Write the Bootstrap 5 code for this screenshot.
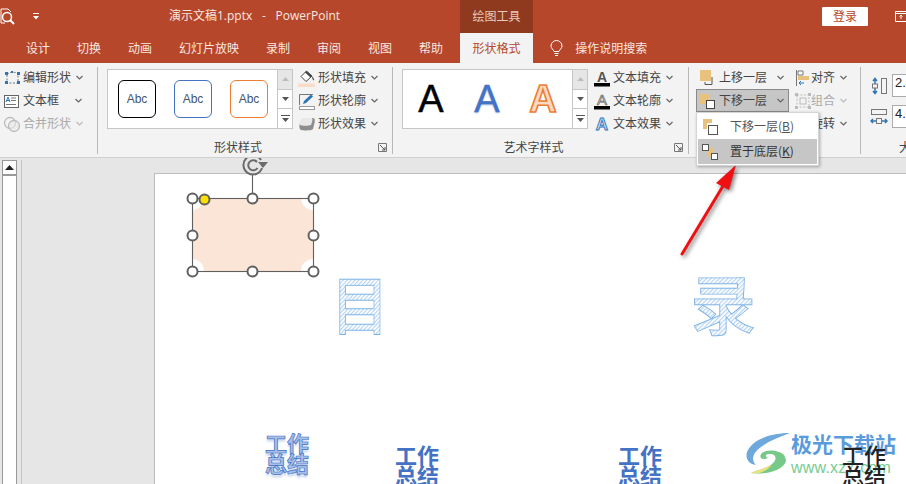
<!DOCTYPE html>
<html lang="zh-CN">
<head>
<meta charset="utf-8">
<title>PowerPoint</title>
<link href="https://cdn.jsdelivr.net/npm/bootstrap@5.3.0/dist/css/bootstrap.min.css" rel="stylesheet">
<style>
html,body{height:100%;overflow:hidden}
body{font:12px/1.2 "Noto Sans CJK SC","Liberation Sans",sans-serif;color:#444;background:#fff}
.ppt-app{width:906px;height:484px;overflow:hidden}
.ppt-title{height:33px;background:#b7472a;color:#f6e6e0;flex:none}
.ppt-title>*{flex:none}
.ppt-qa{width:33px}
.ppt-qb{width:136px}
.ppt-name{width:291px;font-family:"Open Sans","Noto Sans CJK SC",sans-serif;white-space:pre;word-spacing:1.75px}
.ppt-tool{width:73px;height:33px;background:#8f3a1f;color:#e9c9bd}
.ppt-login{width:46px;height:19px;margin-left:289px;background:#fff;color:#b7472a;border-radius:1px}
.ppt-winbtn{margin-left:27px}
.ppt-tabs{height:30px;background:#b7472a;color:#f6e6e0;padding-left:26px;flex:none}
.ppt-tabs>span{margin-right:27px;white-space:nowrap;flex:none}
.ppt-tabs>.ppt-active{background:#f3f3f3;color:#b7472a;width:73px;height:30px;margin-left:-10px;margin-right:17px}
.ppt-tabs>.ppt-bulb{margin-right:12px}
.ppt-ribbon{height:95px;background:#f3f3f3;border-bottom:1px solid #d0d0d0;flex:none;position:relative;z-index:5}
.ppt-sep{width:1px;margin:4px 0 3px;background:#b8b8b8;flex:none}
.ppt-group{flex:none}
.ppt-g1{width:97px}.ppt-g2{width:294px}.ppt-g3{width:295px}.ppt-g4{width:171px}.ppt-g5{width:100px}
.ppt-body{height:74px;padding-top:3px}
.ppt-g1 .ppt-body{padding-left:3px}
.ppt-g2 .ppt-body,.ppt-g3 .ppt-body{padding-left:9px}
.ppt-g4 .ppt-body{padding-left:7px}
.ppt-g5 .ppt-body{padding-left:9px}
.ppt-cmd{height:23px;white-space:nowrap}
.ppt-ico{width:18px;height:18px;margin-right:2px;flex:none;display:block}
.ppt-caret{width:7px;height:5px;margin-left:5px;flex:none;display:block}
.ppt-off{color:#aaa}
.ppt-label{height:20px;color:#444}
.ppt-labeltext{flex:1;text-align:center}
.ppt-expand{width:9px;height:9px;margin-right:5px;flex:none;display:block}
.ppt-gallery{width:186px;height:60px;margin-top:3px;background:#fff;border:1px solid #c6c6c6;flex:none}
.ppt-items{flex:1;padding-left:10px;gap:18px}
.ppt-abc{width:38px;height:38px;border:1.3px solid #000;border-radius:6px;font:12px "Liberation Sans",sans-serif;color:#44546a}
.ppt-abc-b{border-color:#4472c4}.ppt-abc-o{border-color:#ed7d31}
.ppt-scroll{width:15px;border-left:1px solid #c6c6c6;flex:none}
.ppt-scroll>div{flex:1;border-bottom:1px solid #c6c6c6}
.ppt-scroll>div:last-child{border-bottom:0}
.ppt-scroll>.ppt-dis{background:#e6e6e6}
.ppt-cmds{margin-left:5px}
.ppt-wa{padding-left:4px;gap:8px}
.ppt-wa>span{width:48px;text-align:center;font:38px/1 "Liberation Sans",sans-serif}
.ppt-wa-k{color:#000;-webkit-text-stroke:.5px #000}
.ppt-wa-b{color:#4472c4;-webkit-text-stroke:.4px #4472c4;text-shadow:0 1px 2px #9db5de}
.ppt-wa-o{color:#fbd9c2;-webkit-text-stroke:1.6px #ed7d31;font-weight:700!important}
.ppt-col1{width:93px}
.ppt-col2{margin-left:6px}
.ppt-col1 .ppt-cmd{padding-left:3px}
.ppt-col1 .ppt-caret{margin-left:10px}
.ppt-col2 .ppt-ico{width:16px;margin-right:0}
.ppt-col2 .ppt-caret{margin-left:5px}
.ppt-pressed{background:#c6c6c6;outline:1px solid #8a8a8a;outline-offset:-1px}
.ppt-menu{position:absolute;left:696px;top:49px;width:123px;height:54px;background:#fff;border:1px solid #d4d4d4;box-shadow:1px 1px 3px rgba(0,0,0,.3);padding:1px}
.ppt-mi{height:25px;padding-left:3px;white-space:nowrap;color:#555}
.ppt-mi .ppt-ico{margin-right:11px}
.ppt-mi-on{background:#c6c6c6;color:#333}
.ppt-size{height:23px;margin-bottom:8px;gap:4px;margin-top:8px}
.ppt-size+.ppt-size{margin-top:0}
.ppt-field{width:40px;height:23px;background:#fff;border:1px solid #ababab;padding-left:2px;font:13px "Liberation Sans",sans-serif;color:#222}
.ppt-size .ppt-ico{margin:0}
.ppt-work{flex:1;background:#e6e6e6;position:relative;overflow:hidden}
.ppt-vs{width:15px;margin:2px 0 0 2px;background:#fff;border:1px solid #999;border-bottom:0;flex:none}
.ppt-vs-up{height:15px;border-bottom:2px solid #999}
.ppt-vline{width:1px;margin:2px 0 0 4px;background:#c4c4c4;flex:none}
.ppt-slide{margin:15px 0 0 132px;flex:1;background:#fff;border-left:1px solid #bdbdbd;border-top:1px solid #bdbdbd;position:relative}
.ppt-wt{position:absolute;font:700 22px/20px "Noto Sans CJK SC",sans-serif;color:#4472c4;width:44px;text-align:center}
.ppt-wt1{left:110px;top:258px;color:#a5bfe8;-webkit-text-stroke:.7px #4472c4;text-shadow:0 3px 2px rgba(68,114,196,.25)}
.ppt-wt2{left:240px;top:270px}
.ppt-wt3{left:463px;top:270px}
.ppt-wt4{left:687px;top:270px;color:#222;font-weight:500}
.ppt-mark{position:absolute;left:590px;top:258px;width:160px;height:50px}
.ppt-mark-logo{width:46px;height:44px;flex:none;display:block}
.ppt-mark-cn{font:700 21px/22px "Noto Sans CJK SC",sans-serif;color:#5a9bdc;white-space:nowrap}
.ppt-mark-en{font:16px/20px "Liberation Sans",sans-serif;color:#78cc90;margin-top:4px;white-space:nowrap;letter-spacing:.2px}
.ppt-over{position:absolute;left:0;top:0;width:906px;height:326px;display:block}
.ppt-bigtext{font:400 62px "Noto Sans CJK SC",sans-serif;text-anchor:middle}
.ppt-bigtext-w{font-size:64px}
.ppt-arrow{filter:drop-shadow(2px 2px 2px rgba(0,0,0,.5))}
</style>
</head>
<body>
<svg width="0" height="0" class="d-block" aria-hidden="true">
  <defs>
    <symbol id="c" viewBox="0 0 7 5"><path d="M.5 1 3.5 4 6.500 1" fill="none" stroke="#666" stroke-width="1.200"/></symbol>
    <symbol id="cd" viewBox="0 0 7 5"><path d="M.5 1 3.5 4 6.500 1" fill="none" stroke="#bbb" stroke-width="1.200"/></symbol>
    <symbol id="ex" viewBox="0 0 9 9"><path d="M.5 8.500V.5H8.500V8.500Z" fill="none" stroke="#777"/><path d="M2 2 7 7M7 4V7H4" fill="none" stroke="#555"/></symbol>
  </defs>
</svg>
<div class="ppt-app d-flex flex-column">
  <div class="ppt-title d-flex align-items-center">
    <div class="ppt-qa d-flex align-items-center">
      <svg width="16" height="18" viewBox="0 0 16 18"><path d="M1 1H8L11 4" fill="none" stroke="#fff"/><path d="M1 1V15H5" fill="none" stroke="#fff"/><circle cx="7" cy="9" r="4.500" fill="none" stroke="#fff" stroke-width="1.500"/><path d="M10 12 14 16" stroke="#fff" stroke-width="2"/></svg>
    </div>
    <div class="ppt-qb d-flex align-items-center">
      <svg width="6" height="7" viewBox="0 0 6 7"><path d="M0 0H6V1H0ZM0 3H6L3 6.500Z" fill="#fff"/></svg>
    </div>
    <div class="ppt-name">演示文稿1.pptx  -  PowerPoint</div>
    <div class="ppt-tool d-flex align-items-center justify-content-center">绘图工具</div>
    <div class="ppt-login d-flex align-items-center justify-content-center">登录</div>
    <svg class="ppt-winbtn" width="14" height="11" viewBox="0 0 14 11"><path d="M.5.5H14M.5.5V10.500H14M.5 2.500H14" fill="none" stroke="#fff"/><path d="M6 8V4M4.500 5.500 6 4 7.500 5.500" fill="none" stroke="#fff"/></svg>
  </div>
  <div class="ppt-tabs d-flex align-items-center">
    <span>设计</span><span>切换</span><span>动画</span><span>幻灯片放映</span><span>录制</span><span>审阅</span><span>视图</span><span>帮助</span>
    <span class="ppt-active d-flex align-items-center justify-content-center">形状格式</span>
    <span class="ppt-bulb d-flex"><svg width="13" height="17" viewBox="0 0 13 17"><path d="M4 11.500C3.500 9.500 1 8.500 1 6A5.500 5.500 0 0 1 12 6C12 8.500 9.500 9.500 9 11.500ZM4.500 13.500H8.500M5 15.500H8" fill="none" stroke="#fff"/></svg></span>
    <span>操作说明搜索</span>
  </div>
  <div class="ppt-ribbon d-flex">
    <div class="ppt-group ppt-g1">
      <div class="ppt-body">
        <div class="ppt-cmd d-flex align-items-center"><svg class="ppt-ico" viewBox="0 0 18 18"><path d="M4 5 9 3 15 4 15 14 4 14Z" fill="none" stroke="#777" stroke-dasharray="2 1.500"/><path d="M2 3H5V6H2ZM8 2H10V4H8ZM14 3H17V6H14ZM2 12H5V15H2ZM14 12H17V15H14Z" fill="#2e75b6"/></svg>编辑形状<svg class="ppt-caret"><use href="#c"/></svg></div>
        <div class="ppt-cmd d-flex align-items-center"><svg class="ppt-ico" viewBox="0 0 18 18"><rect x="1.500" y="3.500" width="14" height="12" fill="#fff" stroke="#666"/><path d="M3 10 5 5 7 10M3.800 8.500H6.200" fill="none" stroke="#2e75b6"/><path d="M8 6H13M8 8.500H13M3 12.500H13" stroke="#777"/></svg>文本框<svg class="ppt-caret ms-3"><use href="#c"/></svg></div>
        <div class="ppt-cmd d-flex align-items-center ppt-off"><svg class="ppt-ico" viewBox="0 0 18 18"><circle cx="7" cy="8" r="5.500" fill="none" stroke="#bbb" stroke-width="1.300"/><circle cx="11" cy="11" r="5.500" fill="#e8e8e8" fill-opacity=".6" stroke="#bbb" stroke-width="1.300"/></svg>合并形状<svg class="ppt-caret"><use href="#cd"/></svg></div>
      </div>
    </div>
    <div class="ppt-sep"></div>
    <div class="ppt-group ppt-g2">
      <div class="ppt-body d-flex align-items-start">
        <div class="ppt-gallery d-flex">
          <div class="ppt-items d-flex align-items-center">
            <div class="ppt-abc d-flex align-items-center justify-content-center">Abc</div>
            <div class="ppt-abc ppt-abc-b d-flex align-items-center justify-content-center">Abc</div>
            <div class="ppt-abc ppt-abc-o d-flex align-items-center justify-content-center">Abc</div>
          </div>
          <div class="ppt-scroll d-flex flex-column">
            <div class="ppt-dis d-flex align-items-center justify-content-center"><svg width="7" height="4" viewBox="0 0 7 4"><path d="M0 4 3.500 0 7 4Z" fill="#bdbdbd"/></svg></div>
            <div class="d-flex align-items-center justify-content-center"><svg width="7" height="4" viewBox="0 0 7 4"><path d="M0 0 3.500 4 7 0Z" fill="#555"/></svg></div>
            <div class="d-flex align-items-center justify-content-center"><svg width="9" height="7" viewBox="0 0 9 7"><path d="M0 0H9V1H0ZM1 3 4.500 7 8 3Z" fill="#555"/></svg></div>
          </div>
        </div>
        <div class="ppt-cmds">
          <div class="ppt-cmd d-flex align-items-center"><svg class="ppt-ico" viewBox="0 0 18 18"><path d="M3 7.500 8.500 2 14 7 8 12.500Z" fill="#fff" stroke="#444"/><path d="M7 3.500 8.500 2 14 7 12.500 8.500Z" fill="#444"/><path d="M14 7C15.500 9 16.500 10 16 11.500 14.500 11.500 14 9 14 7Z" fill="#555"/><rect x="0" y="14.500" width="17" height="3.500" fill="#fbdcc8"/></svg>形状填充<svg class="ppt-caret"><use href="#c"/></svg></div>
          <div class="ppt-cmd d-flex align-items-center"><svg class="ppt-ico" viewBox="0 0 18 18"><path d="M1.500 13V2.500H15" fill="none" stroke="#777"/><rect x="1.500" y="14.500" width="15" height="3" fill="#fff" stroke="#999"/><path d="M5 12 6 9 13 2.500 15 4.500 8 11Z" fill="#2e75b6"/></svg>形状轮廓<svg class="ppt-caret"><use href="#c"/></svg></div>
          <div class="ppt-cmd d-flex align-items-center"><svg class="ppt-ico" viewBox="0 0 18 18"><path d="M5 3H15C17 3 17 5 16.500 8L15 14C13 16 5 15.500 3 15 1 14 1 11 2 8Z" fill="#8d8d8d"/><path d="M5 3H13C15 3 14.500 5 14 7L13 10C11 11 4 11 2 10 1.500 8 3 4 5 3Z" fill="#e8e8e8"/></svg>形状效果<svg class="ppt-caret"><use href="#c"/></svg></div>
        </div>
      </div>
      <div class="ppt-label d-flex align-items-center"><div class="ppt-labeltext">形状样式</div><svg class="ppt-expand"><use href="#ex"/></svg></div>
    </div>
    <div class="ppt-sep"></div>
    <div class="ppt-group ppt-g3">
      <div class="ppt-body d-flex align-items-start">
        <div class="ppt-gallery d-flex">
          <div class="ppt-items ppt-wa d-flex align-items-center">
            <span class="ppt-wa-k">A</span><span class="ppt-wa-b">A</span><span class="ppt-wa-o">A</span>
          </div>
          <div class="ppt-scroll d-flex flex-column">
            <div class="ppt-dis d-flex align-items-center justify-content-center"><svg width="7" height="4" viewBox="0 0 7 4"><path d="M0 4 3.500 0 7 4Z" fill="#bdbdbd"/></svg></div>
            <div class="d-flex align-items-center justify-content-center"><svg width="7" height="4" viewBox="0 0 7 4"><path d="M0 0 3.500 4 7 0Z" fill="#555"/></svg></div>
            <div class="d-flex align-items-center justify-content-center"><svg width="9" height="7" viewBox="0 0 9 7"><path d="M0 0H9V1H0ZM1 3 4.500 7 8 3Z" fill="#555"/></svg></div>
          </div>
        </div>
        <div class="ppt-cmds">
          <div class="ppt-cmd d-flex align-items-center"><svg class="ppt-ico" viewBox="0 0 18 18"><text x="9" y="13" text-anchor="middle" font-family="Liberation Sans" font-weight="700" font-size="14" fill="#555">A</text><rect x="1" y="14" width="16" height="3.500" fill="#000"/></svg>文本填充<svg class="ppt-caret"><use href="#c"/></svg></div>
          <div class="ppt-cmd d-flex align-items-center"><svg class="ppt-ico" viewBox="0 0 18 18"><text x="9" y="13" text-anchor="middle" font-family="Liberation Sans" font-size="15" fill="#eee" stroke="#666" stroke-width=".7">A</text><rect x="1" y="14" width="16" height="3.500" fill="#000"/></svg>文本轮廓<svg class="ppt-caret"><use href="#c"/></svg></div>
          <div class="ppt-cmd d-flex align-items-center"><svg class="ppt-ico" viewBox="0 0 18 18"><text x="9" y="15" text-anchor="middle" font-family="Liberation Sans" font-weight="700" font-size="17" fill="#cfe0f4" stroke="#2e75b6" stroke-width=".9">A</text></svg>文本效果<svg class="ppt-caret"><use href="#c"/></svg></div>
        </div>
      </div>
      <div class="ppt-label d-flex align-items-center"><div class="ppt-labeltext">艺术字样式</div><svg class="ppt-expand"><use href="#ex"/></svg></div>
    </div>
    <div class="ppt-sep"></div>
    <div class="ppt-group ppt-g4">
      <div class="ppt-body d-flex">
        <div class="ppt-col1">
          <div class="ppt-cmd d-flex align-items-center"><svg class="ppt-ico" viewBox="0 0 18 18"><rect x="1" y="1" width="11" height="11" fill="#e8c17c"/><path d="M13 8V15.500H6V13" fill="none" stroke="#555"/></svg>上移一层<svg class="ppt-caret"><use href="#c"/></svg></div>
          <div class="ppt-cmd ppt-pressed d-flex align-items-center"><svg class="ppt-ico" viewBox="0 0 18 18"><rect x="1" y="2" width="10" height="10" fill="#e8c17c"/><rect x="7.500" y="8.500" width="8" height="8" fill="#fff" stroke="#444"/></svg>下移一层<svg class="ppt-caret"><use href="#c"/></svg></div>
        </div>
        <div class="ppt-col2">
          <div class="ppt-cmd d-flex align-items-center"><svg class="ppt-ico" viewBox="0 0 16 18"><path d="M1.500 1V17" stroke="#777"/><path d="M3 2H8V6H3Z" fill="#fff" stroke="#777"/><rect x="3" y="7" width="11" height="4" fill="#e8c17c"/><path d="M9 14H4M6 12 4 14 6 16" fill="none" stroke="#2e75b6"/></svg>对齐<svg class="ppt-caret"><use href="#c"/></svg></div>
          <div class="ppt-cmd ppt-off d-flex align-items-center"><svg class="ppt-ico" viewBox="0 0 16 18"><rect x="2" y="3" width="12" height="12" fill="none" stroke="#bbb" stroke-dasharray="2 1.500"/><rect x="5" y="6" width="6" height="6" fill="none" stroke="#bbb"/><path d="M0 1H3V4H0ZM13 1H16V4H13ZM0 14H3V17H0ZM13 14H16V17H13Z" fill="#bbb"/></svg>组合<svg class="ppt-caret"><use href="#cd"/></svg></div>
          <div class="ppt-cmd d-flex align-items-center"><svg class="ppt-ico" viewBox="0 0 16 18"></svg>旋转<svg class="ppt-caret"><use href="#c"/></svg></div>
        </div>
      </div>
    </div>
    <div class="ppt-sep"></div>
    <div class="ppt-group ppt-g5">
      <div class="ppt-body">
        <div class="ppt-size d-flex align-items-center"><svg class="ppt-ico" viewBox="0 0 18 18"><path d="M5 2V16M3 4 5 1.500 7 4M3 14 5 16.500 7 14" fill="none" stroke="#2e75b6" stroke-width="1.500"/><rect x="2.500" y="7" width="5" height="4" fill="#f3f3f3" stroke="#777"/><rect x="11.500" y="1.500" width="5" height="15" fill="none" stroke="#777"/></svg><div class="ppt-field flex-shrink-0">2.4</div></div>
        <div class="ppt-size d-flex align-items-center"><svg class="ppt-ico" viewBox="0 0 18 18"><rect x="1.500" y="1.500" width="15" height="5" fill="none" stroke="#777"/><path d="M1 13H17M3 11 1 13 3 15M15 11 17 13 15 15" fill="none" stroke="#2e75b6" stroke-width="1.500"/><rect x="6.500" y="10.500" width="5" height="5" fill="#f3f3f3" stroke="#777"/></svg><div class="ppt-field flex-shrink-0">4.0</div></div>
      </div>
      <div class="ppt-label d-flex align-items-center"><div class="ppt-labeltext">大小</div></div>
    </div>
    <div class="ppt-menu">
      <div class="ppt-mi d-flex align-items-center"><svg class="ppt-ico" viewBox="0 0 18 18"><path d="M2 1H11V5H6V11H2Z" fill="#e8c17c"/><rect x="7.500" y="7.500" width="9" height="9" fill="#fff" stroke="#555"/></svg>下移一层(<u>B</u>)</div>
      <div class="ppt-mi ppt-mi-on d-flex align-items-center"><svg class="ppt-ico" viewBox="0 0 18 18"><rect x="1.500" y="1.500" width="6" height="6" fill="#fff" stroke="#555"/><path d="M6 8H9V5H13V13H9V14H6Z" fill="#e8c17c"/><rect x="10.500" y="10.500" width="6" height="6" fill="#fff" stroke="#555"/></svg>置于底层(<u>K</u>)</div>
    </div>
  </div>
  <div class="ppt-work d-flex">
    <div class="ppt-vs"><div class="ppt-vs-up d-flex align-items-center justify-content-center"><svg width="9" height="5" viewBox="0 0 9 5"><path d="M0 5 4.500 0 9 5Z" fill="#222"/></svg></div></div>
    <div class="ppt-vline"></div>
    <div class="ppt-slide">
      <div class="ppt-wt ppt-wt1">工作<br>总结</div>
      <div class="ppt-wt ppt-wt2">工作<br>总结</div>
      <div class="ppt-wt ppt-wt3">工作<br>总结</div>
      <div class="ppt-mark d-flex">
        <svg class="ppt-mark-logo" viewBox="0 0 46 44"><path d="M45 1C28 1 8 6 2 20 0 27 4 32 11 33 5 27 9 20 16 15 24 9 34 5 45 1Z" fill="#6fa8dc"/><path d="M39 23C34 18 22 17 17 21 13 25 17 29 23 26 20 25 20 22 24 22 31 21 33 27 27 32 22 36 13 38 6 41 20 43 38 39 41 29 41 27 40 25 39 23Z" fill="#77c98a"/><path d="M6 41C13 38 20 37 27 32 24 38 14 43 6 41Z" fill="#e9e27a"/></svg>
        <div><div class="ppt-mark-cn">极光下载站</div><div class="ppt-mark-en">www.xz7.com</div></div>
      </div>
      <div class="ppt-wt ppt-wt4">工作<br>总结</div>
    </div>
    <svg class="ppt-over" viewBox="0 158 906 326">
      <defs>
        <pattern id="hatch" width="3" height="3" patternUnits="userSpaceOnUse" patternTransform="rotate(45)">
          <rect width="3" height="3" fill="#fff"/><rect width="1.200" height="3" fill="#b5d4f2"/>
        </pattern>
        <text id="big1" class="ppt-bigtext" transform="translate(360 329) scale(.92 1)">目</text>
        <text id="big2" class="ppt-bigtext ppt-bigtext-w" x="723" y="329">录</text>
      </defs>
      <use href="#big1" fill="#7fb3e6" stroke="#7fb3e6" stroke-width="2.400"/>
      <use href="#big1" fill="url(#hatch)" stroke="url(#hatch)" stroke-width=".6"/>
      <use href="#big2" fill="#7fb3e6" stroke="#7fb3e6" stroke-width="2.400"/>
      <use href="#big2" fill="url(#hatch)" stroke="url(#hatch)" stroke-width=".5"/>
      <path d="M204 198H301A12 12 0 0 0 313 210V259A12 12 0 0 0 301 271H204A12 12 0 0 0 192 259V210A12 12 0 0 0 204 198Z" fill="#fbe5d6"/>
      <rect x="192.500" y="198.500" width="121" height="73" fill="none" stroke="#606060" stroke-width="1.100"/>
      <path d="M252.500 175V198" stroke="#606060" stroke-width="1.100"/>
      <g fill="none" stroke="#6a6a6a" stroke-width="2">
        <path d="M261 160A9.500 9.500 0 1 0 262 168"/>
        <path d="M257 162A5 5 0 1 0 257.500 168"/>
      </g>
      <path d="M258 162H268L263 168Z" fill="#6a6a6a"/>
      <g fill="#fff" stroke="#606060" stroke-width="2">
        <circle cx="192.500" cy="198.500" r="5"/><circle cx="252.500" cy="198.500" r="5"/><circle cx="313.500" cy="198.500" r="5"/>
        <circle cx="192.500" cy="235.500" r="5"/><circle cx="313.500" cy="235.500" r="5"/>
        <circle cx="192.500" cy="271.500" r="5"/><circle cx="252.500" cy="271.500" r="5"/><circle cx="313.500" cy="271.500" r="5"/>
        <circle cx="204.500" cy="199.500" r="5" fill="#ffdf00"/>
      </g>
      <g class="ppt-arrow">
        <path d="M682 254 723 186" stroke="#f01014" stroke-width="3" stroke-linecap="round"/>
        <path d="M736 165 716 183 729 190Z" fill="#f01014"/>
      </g>
    </svg>
  </div>
</div>
<script src="https://cdn.jsdelivr.net/npm/bootstrap@5.3.0/dist/js/bootstrap.bundle.min.js"></script>
</body>
</html>
